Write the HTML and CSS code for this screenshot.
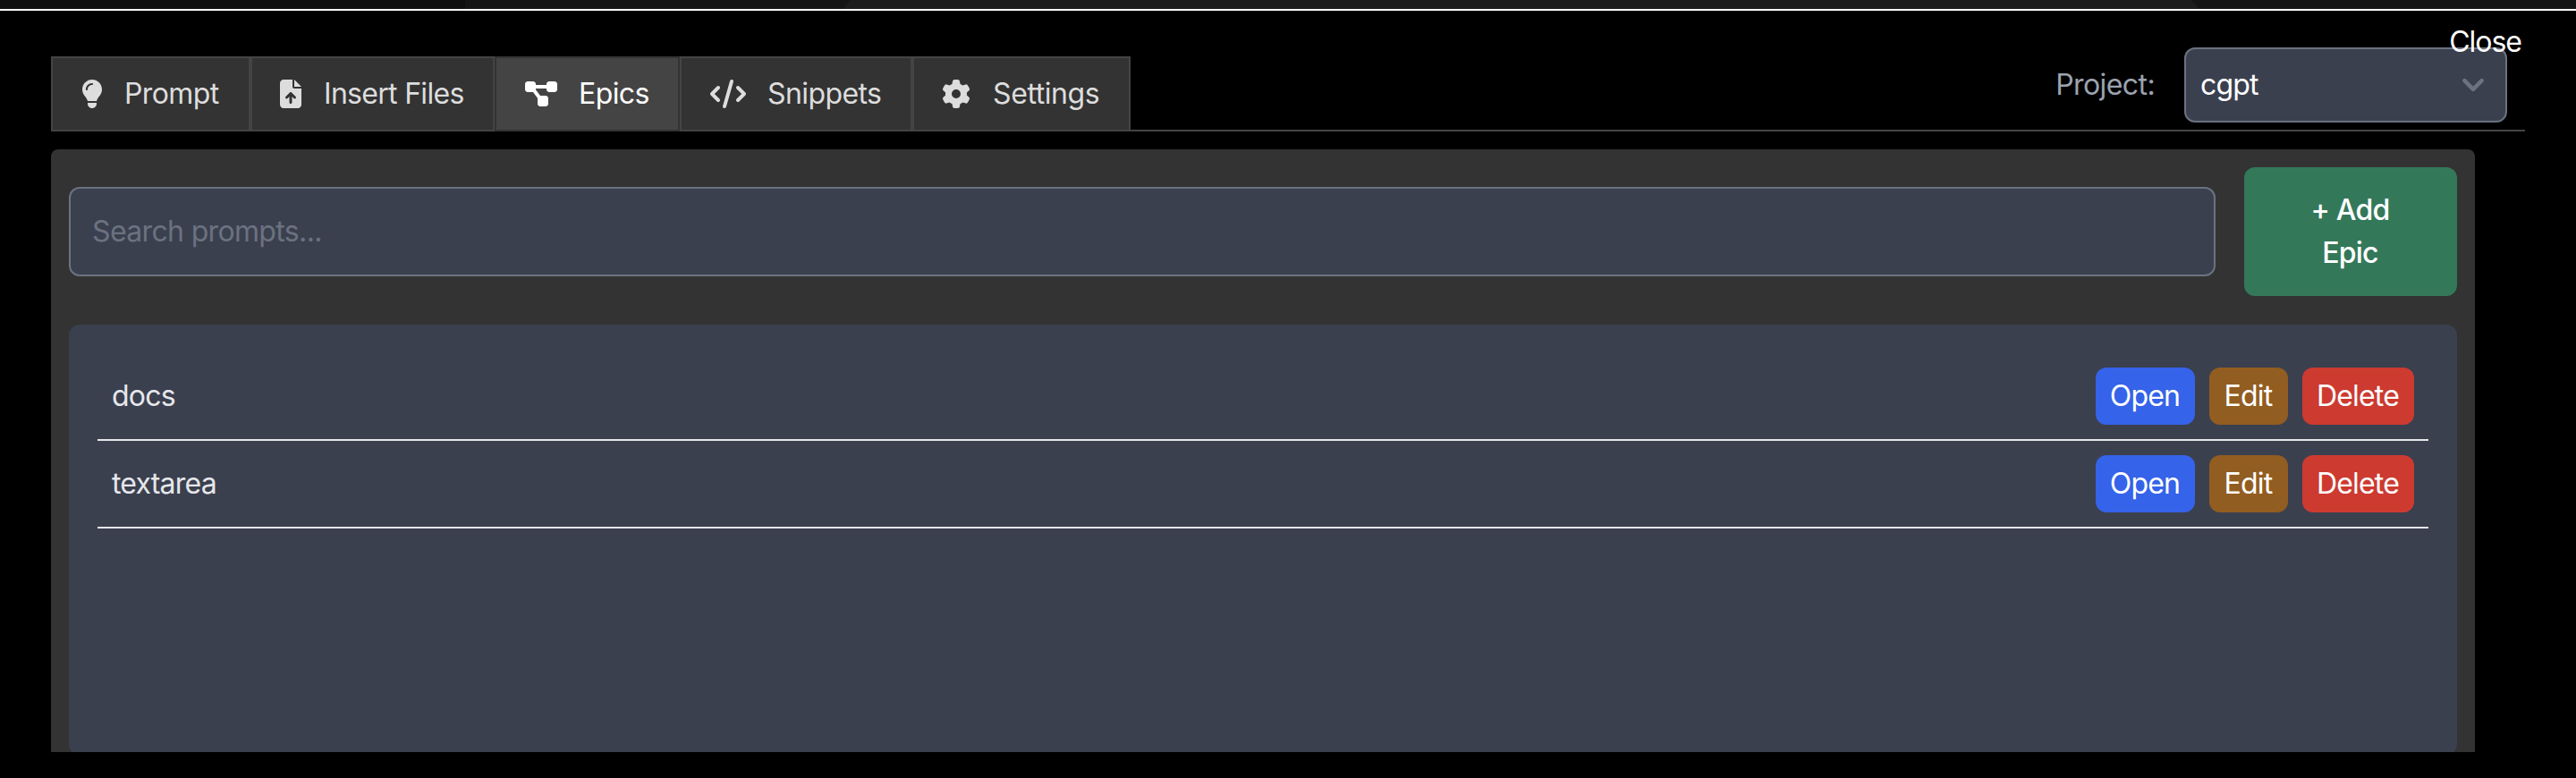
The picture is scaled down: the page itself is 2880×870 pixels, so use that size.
FILE: index.html
```
<!DOCTYPE html>
<html lang="en">
<head>
<meta charset="utf-8">
<title>Epics</title>
<link rel="stylesheet" href="styles.css">
</head>
<body>
<div class="backdrop"><div class="backdrop-shape"></div></div>
<main class="dialog">
  <header class="topbar">
    <nav class="tabs">
      <button class="tab tab-prompt"><svg class="icon" width="24" height="32" viewBox="0 0 384 512"><path d="M272 384c9.600-31.900 29.500-59.100 49.200-86.200c5.200-7.100 10.400-14.200 15.400-21.400c19.800-28.500 31.400-63 31.400-100.300C368 78.800 289.200 0 192 0S16 78.800 16 176c0 37.300 11.600 71.900 31.400 100.300c5 7.200 10.200 14.300 15.400 21.400c19.800 27.100 39.700 54.400 49.200 86.200H272zM192 512c44.200 0 80-35.800 80-80V416H112v16c0 44.200 35.800 80 80 80zM112 176c0 8.800-7.200 16-16 16s-16-7.200-16-16c0-61.900 50.100-112 112-112c8.800 0 16 7.200 16 16s-7.200 16-16 16c-44.200 0-80 35.800-80 80z"/></svg><span class="text">Prompt</span></button>
      <button class="tab tab-files"><svg class="icon" width="24" height="32" viewBox="0 0 384 512"><path d="M64 0C28.700 0 0 28.700 0 64V448c0 35.300 28.700 64 64 64H320c35.300 0 64-28.700 64-64V160H256c-17.700 0-32-14.300-32-32V0H64zM256 0V128H384L256 0zM216 408c0 13.300-10.700 24-24 24s-24-10.700-24-24V305.900l-31 31c-9.400 9.400-24.600 9.400-33.900 0s-9.400-24.600 0-33.900l72-72c9.400-9.400 24.600-9.400 33.900 0l72 72c9.400 9.400 9.400 24.600 0 33.900s-24.600 9.400-33.900 0l-31-31V408z"/></svg><span class="text">Insert Files</span></button>
      <button class="tab tab-epics active"><svg class="icon" width="36" height="32" viewBox="0 0 576 512"><path d="M0 80C0 53.500 21.500 32 48 32h96c26.500 0 48 21.500 48 48V96H384V80c0-26.500 21.500-48 48-48h96c26.500 0 48 21.500 48 48v96c0 26.500-21.500 48-48 48H432c-26.500 0-48-21.500-48-48V160H192v16c0 1.700-.1 3.400-.3 5L272 288h96c26.500 0 48 21.500 48 48v96c0 26.500-21.500 48-48 48H272c-26.500 0-48-21.500-48-48V336c0-1.700 .1-3.400 .3-5L144 224H48c-26.500 0-48-21.500-48-48V80z"/></svg><span class="text">Epics</span></button>
      <button class="tab tab-snippets"><svg class="icon" width="40" height="32" viewBox="0 0 640 512"><path d="M392.800 1.200c-17-4.900-34.700 5-39.600 22l-128 448c-4.900 17 5 34.700 22 39.600s34.700-5 39.600-22l128-448c4.900-17-5-34.700-22-39.600zm80.600 120.100c-12.500 12.500-12.500 32.800 0 45.300L562.700 256l-89.400 89.400c-12.500 12.500-12.500 32.800 0 45.300s32.800 12.500 45.300 0l112-112c12.500-12.500 12.500-32.800 0-45.300l-112-112c-12.500-12.500-32.800-12.500-45.300 0zm-306.700 0c-12.500-12.500-32.800-12.500-45.300 0l-112 112c-12.500 12.500-12.500 32.800 0 45.300l112 112c12.500 12.500 32.800 12.500 45.300 0s12.500-32.800 0-45.300L77.300 256l89.400-89.400c12.500-12.500 12.500-32.800 0-45.300z"/></svg><span class="text">Snippets</span></button>
      <button class="tab tab-settings"><svg class="icon" width="32" height="32" viewBox="0 0 512 512"><path d="M495.900 166.600c3.200 8.700 .5 18.400-6.400 24.600l-43.300 39.400c1.100 8.300 1.700 16.800 1.700 25.400s-.6 17.100-1.700 25.400l43.300 39.400c6.900 6.200 9.600 15.900 6.400 24.600c-4.400 11.900-9.700 23.300-15.800 34.300l-4.700 8.100c-6.600 11-14 21.400-22.100 31.200c-5.900 7.200-15.700 9.600-24.500 6.800l-55.700-17.700c-13.400 10.300-28.200 18.900-44 25.400l-12.500 57.100c-2 9.100-9 16.300-18.200 17.800c-13.800 2.300-28 3.500-42.500 3.500s-28.700-1.200-42.500-3.500c-9.200-1.500-16.200-8.700-18.200-17.800l-12.500-57.100c-15.800-6.500-30.600-15.100-44-25.400L83.100 425.900c-8.800 2.800-18.600 .3-24.500-6.800c-8.100-9.800-15.500-20.200-22.100-31.200l-4.700-8.100c-6.100-11-11.400-22.400-15.800-34.300c-3.200-8.700-.5-18.400 6.400-24.600l43.300-39.400C64.600 273.100 64 264.600 64 256s.6-17.100 1.700-25.400L22.400 191.200c-6.900-6.200-9.600-15.900-6.400-24.600c4.400-11.900 9.700-23.300 15.800-34.300l4.700-8.100c6.600-11 14-21.400 22.100-31.200c5.900-7.200 15.700-9.600 24.500-6.800l55.700 17.700c13.400-10.300 28.200-18.900 44-25.400l12.500-57.100c2-9.100 9-16.300 18.200-17.800C227.300 1.200 241.500 0 256 0s28.700 1.200 42.500 3.500c9.200 1.500 16.200 8.700 18.200 17.800l12.500 57.100c15.800 6.500 30.600 15.100 44 25.400l55.700-17.700c8.800-2.800 18.600-.3 24.500 6.800c8.100 9.800 15.500 20.200 22.100 31.200l4.700 8.100c6.100 11 11.400 22.400 15.800 34.300zM256 336a80 80 0 1 0 0-160 80 80 0 1 0 0 160z"/></svg><span class="text">Settings</span></button>
    </nav>
    <div class="project">
      <span class="project-label">Project:</span>
      <div class="select"><span class="select-value">cgpt</span><svg width="48" height="48" viewBox="0 0 20 20"><path d="M6 8l4 4 4-4" fill="none" stroke="#6b7280" stroke-width="1.9" stroke-linecap="round" stroke-linejoin="round"/></svg></div>
    </div>
    <span class="close">Close</span>
  </header>
  <section class="panel">
    <div class="toolbar">
      <div class="search"><span class="placeholder">Search prompts...</span></div>
      <button class="add"><span>+ Add</span><span>Epic</span></button>
    </div>
    <div class="list">
      <div class="row"><span>docs</span><div class="actions"><button class="btn open"><span>Open</span></button><button class="btn edit"><span>Edit</span></button><button class="btn delete"><span>Delete</span></button></div></div>
      <div class="row"><span>textarea</span><div class="actions"><button class="btn open"><span>Open</span></button><button class="btn edit"><span>Edit</span></button><button class="btn delete"><span>Delete</span></button></div></div>
    </div>
  </section>
</main>
</body>
</html>
```
FILE: styles.css
```
* { box-sizing: border-box; }
html, body { margin: 0; height: 870px; overflow: hidden; background: #000; }
body { font: 400 32px/48px Inter, "Liberation Sans", sans-serif; letter-spacing: -0.8px; color: #fff; }
button { margin: 0; padding: 0; border: 0; font: inherit; letter-spacing: inherit; color: inherit; }
span { white-space: nowrap; }

.backdrop { height: 10px; background: linear-gradient(90deg, #0f0f0f 520px, #141414 520px); }
.backdrop-shape { width: 1517px; height: 10px; margin-left: 942px; background: #1c1c1c; clip-path: polygon(9px 0, 1508px 0, 100% 100%, 0 100%); }
.dialog { height: 860px; border-top: 2px solid #fff; padding: 41px 57px 0; }
.topbar { position: relative; display: flex; align-items: flex-end; justify-content: space-between; height: 94px; border-bottom: 2px solid #444; }
.tabs { display: flex; height: 84px; margin-bottom: -2px; letter-spacing: -0.6px; }
.tab { display: flex; align-items: center; gap: 24px; height: 84px; padding: 0 0 0 32px; border: 2px solid #444; background: #333; color: #ddd; }
.tab.active { background: #444; border-color: #333; color: #fff; }
.icon { fill: currentColor; flex: none; }
.tab-prompt { width: 223px; }
.tab-files { width: 273px; padding-left: 31px; gap: 25px; letter-spacing: -0.7px; }
.tab-epics { width: 207px; }
.tab-snippets { width: 260px; }
.tab-settings { width: 244px; padding-left: 31px; gap: 25px; letter-spacing: -0.4px; }

.project { display: flex; align-items: center; gap: 33px; height: 84px; margin: 0 20px 8px 0; }
.project-label { color: #9ca3af; letter-spacing: -0.6px; }
.select { display: flex; align-items: center; justify-content: space-between; width: 361px; height: 84px; padding: 0 12px 0 16px; border: 2px solid #6b7280; border-radius: 12px; background: #3b404f; }
.close { position: absolute; right: 4px; top: -30px; letter-spacing: -1px; }

.panel { width: 2710px; height: 674px; margin-top: 20px; padding: 20px 20px 0; border-radius: 8px 8px 0 0; background: #333; overflow: hidden; }
.toolbar { display: flex; align-items: center; gap: 32px; height: 144px; }
.search { flex: 1; display: flex; align-items: center; height: 100px; padding: 0 24px; border: 2px solid #6b7280; border-radius: 12px; background: #3b404f; color: #6b7280; letter-spacing: -0.65px; }
.add { display: flex; flex-direction: column; align-items: center; justify-content: center; width: 238px; height: 144px; padding-right: 1px; border-radius: 12px; background: #34785a; font-weight: 500; }
.list { height: 481px; margin-top: 32px; padding: 32px; border-radius: 12px; background: #3b404f; }
.row { display: flex; align-items: center; justify-content: space-between; height: 98px; padding: 0 16px; border-bottom: 2px solid #e5e7eb; color: #e5e7eb; }
.actions { display: flex; gap: 16px; }
.btn { display: flex; align-items: center; justify-content: center; height: 64px; padding-right: 1px; border-radius: 12px; color: #fff; }
.open { width: 111px; background: #3563e9; }
.edit { width: 88px; background: #925d20; }
.delete { width: 125px; background: #cd3a30; }
```
